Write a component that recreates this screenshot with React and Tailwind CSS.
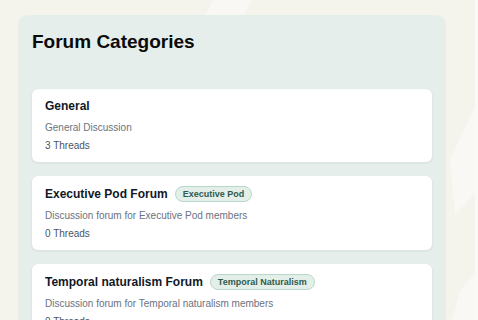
import React from 'react';

const categories = [
  { name: 'General', desc: 'General Discussion', threads: 3 },
  {
    name: 'Executive Pod Forum',
    tag: 'Executive Pod',
    desc: 'Discussion forum for Executive Pod members',
    threads: 0,
  },
  {
    name: 'Temporal naturalism Forum',
    tag: 'Temporal Naturalism',
    desc: 'Discussion forum for Temporal naturalism members',
    threads: 0,
  },
];

function CategoryCard({ cat }) {
  return (
    <div className="rounded-md bg-white px-[13px] pt-[10px] pb-[9px] shadow-[0_1px_3px_rgba(0,0,0,0.08)]">
      <div className="flex items-center gap-[7px]">
        <h3 className="text-[12px] font-bold leading-[15px] text-[#111827]">{cat.name}</h3>
        {cat.tag && (
          <span className="rounded-full border border-[#b9d8c9] bg-[#e4efe9] px-[7px] text-[9px] font-bold leading-[14px] text-[#2f5a4c]">
            {cat.tag}
          </span>
        )}
      </div>
      <p className="mt-[6px] text-[10px] leading-[15px] text-[#6b7280]">{cat.desc}</p>
      <p className="mt-[3px] text-[10px] leading-[15px] text-[#4b5563]">{cat.threads} Threads</p>
    </div>
  );
}

export default function App() {
  return (
    <div
      className="relative h-[320px] w-[478px] overflow-hidden bg-[#f4f3ec]"
      style={{ fontFamily: '"Liberation Sans", Arial, sans-serif' }}
    >
      {/* faint background shapes */}
      <svg className="absolute inset-0" width="478" height="320" viewBox="0 0 478 320">
        <polygon points="213,0 253,0 243,16 205,16" fill="#f9f8f4" />
        <polygon points="478,100 478,190 455,215 450,160" fill="#f9f8f4" />
        <polygon points="478,270 478,320 452,320 460,290" fill="#f9f8f4" />
        <rect x="475" y="0" width="3" height="320" fill="#f9f9f6" />
      </svg>

      <div className="relative ml-[18px] mt-[15px] w-[428px] rounded-[10px] bg-[#e6eeeb] px-[14px] pt-[15px] pb-[14px]">
        <h2 className="mb-[35px] text-[19px] font-bold leading-[24px] text-[#0a0a0a]">Forum Categories</h2>
        <div className="flex flex-col gap-[14px]">
          {categories.map((c) => (
            <CategoryCard key={c.name} cat={c} />
          ))}
        </div>
      </div>
    </div>
  );
}
